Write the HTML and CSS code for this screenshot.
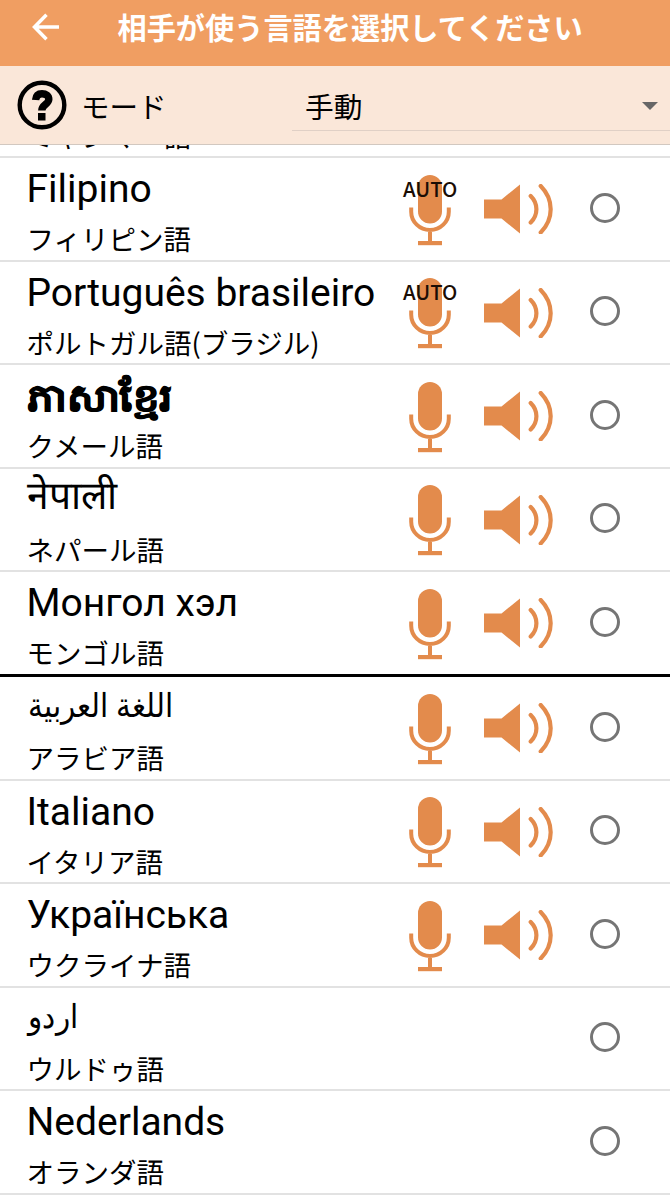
FILE: index.html
```
<!DOCTYPE html>
<html lang="ja">
<head>
  <meta charset="UTF-8">
  <meta name="viewport" content="width=device-width, initial-scale=1.0">
  <title>言語選択</title>
  <link rel="stylesheet" href="styles.css">
</head>
<body>
  <!-- アイコン定義 -->
  <svg class="defs" width="0" height="0">
    <symbol id="mic" viewBox="0 0 42 71">
      <rect x="9" y="0" width="24" height="48.5" rx="12" fill="currentColor"/>
      <path d="M2.2 32.500v4.200a18.800 18.300 0 0 0 37.600 0v-4.200M21 55v12" fill="none" stroke="currentColor" stroke-width="4"/>
      <rect x="9" y="66" width="24" height="4.200" fill="currentColor"/>
    </symbol>
    <symbol id="speaker" viewBox="0 0 70 50">
      <path d="M0 15.500h17.500L36 .5v49L17.500 34.500H0z" fill="currentColor"/>
      <path d="M46.700 12c7.600 7.500 7.600 19 0 26.500M56.700 2c13.300 13.500 13.300 33 0 46.500" fill="none" stroke="currentColor" stroke-width="4.200" stroke-linecap="round"/>
    </symbol>
  </svg>

  <header class="header">
    <svg class="back" viewBox="0 0 28 28"><path d="M27 14H3M14.500 1.800L2.500 14l12 12.200" fill="none" stroke="#fff" stroke-width="3.500"/></svg>
    <h1>相手が使う言語を選択してください</h1>
  </header>

  <div class="modo">
    <svg class="help" viewBox="0 0 50 50">
      <circle cx="25" cy="25" r="22.300" fill="none" stroke="#000" stroke-width="4.400"/>
      <path d="M18.600 20c.4-4.600 3-6.300 6.400-6.300 4 0 6.800 2.100 6.800 5.600 0 5-7 5.300-7 11.200" fill="none" stroke="#000" stroke-width="7.400"/>
      <rect x="21" y="33" width="7.500" height="7.500" fill="#000"/>
    </svg>
    <span class="label">モード</span>
    <div class="select">
      <span>手動</span>
      <span class="caret"></span>
    </div>
  </div>

  <main class="lista">
    <div class="fila">
      <div class="texto"><p class="nombre"></p><p class="ja">ミャンマー語</p></div>
    </div>
    <div class="fila">
      <div class="texto"><p class="nombre">Filipino</p><p class="ja">フィリピン語</p></div>
      <div class="mic"><svg><use href="#mic"/></svg><span class="auto">AUTO</span></div>
      <svg class="speaker"><use href="#speaker"/></svg>
      <span class="radio"></span>
    </div>
    <div class="fila">
      <div class="texto"><p class="nombre">Português brasileiro</p><p class="ja">ポルトガル語(ブラジル)</p></div>
      <div class="mic"><svg><use href="#mic"/></svg><span class="auto">AUTO</span></div>
      <svg class="speaker"><use href="#speaker"/></svg>
      <span class="radio"></span>
    </div>
    <div class="fila">
      <div class="texto"><p class="nombre khmer" lang="km">ភាសាខ្មែរ</p><p class="ja">クメール語</p></div>
      <div class="mic"><svg><use href="#mic"/></svg></div>
      <svg class="speaker"><use href="#speaker"/></svg>
      <span class="radio"></span>
    </div>
    <div class="fila">
      <div class="texto"><p class="nombre nepali" lang="ne">नेपाली</p><p class="ja">ネパール語</p></div>
      <div class="mic"><svg><use href="#mic"/></svg></div>
      <svg class="speaker"><use href="#speaker"/></svg>
      <span class="radio"></span>
    </div>
    <div class="fila separador">
      <div class="texto"><p class="nombre">Монгол хэл</p><p class="ja">モンゴル語</p></div>
      <div class="mic"><svg><use href="#mic"/></svg></div>
      <svg class="speaker"><use href="#speaker"/></svg>
      <span class="radio"></span>
    </div>
    <div class="fila">
      <div class="texto"><p class="nombre arabe" lang="ar">اللغة العربية</p><p class="ja">アラビア語</p></div>
      <div class="mic"><svg><use href="#mic"/></svg></div>
      <svg class="speaker"><use href="#speaker"/></svg>
      <span class="radio"></span>
    </div>
    <div class="fila">
      <div class="texto"><p class="nombre">Italiano</p><p class="ja">イタリア語</p></div>
      <div class="mic"><svg><use href="#mic"/></svg></div>
      <svg class="speaker"><use href="#speaker"/></svg>
      <span class="radio"></span>
    </div>
    <div class="fila">
      <div class="texto"><p class="nombre">Українська</p><p class="ja">ウクライナ語</p></div>
      <div class="mic"><svg><use href="#mic"/></svg></div>
      <svg class="speaker"><use href="#speaker"/></svg>
      <span class="radio"></span>
    </div>
    <div class="fila">
      <div class="texto"><p class="nombre arabe" lang="ur">اردو</p><p class="ja">ウルドゥ語</p></div>
      <span class="radio"></span>
    </div>
    <div class="fila">
      <div class="texto"><p class="nombre">Nederlands</p><p class="ja">オランダ語</p></div>
      <span class="radio"></span>
    </div>
  </main>
</body>
</html>
```
FILE: styles.css
```
*{
  box-sizing: border-box;
}
body{
  margin: 0;
  height: 1200px;
  display: flex;
  flex-direction: column;
  overflow: hidden;
  background-color: #fff;
  color: #000;
  font-family: Roboto, "Noto Sans CJK JP", sans-serif;
}
.defs{
  position: absolute;
}

/* Cabecera */
.header{
  height: 66px;
  flex: none;
  display: flex;
  align-items: flex-start;
  background-color: #f09e62;
  color: #fff;
}
.back{
  width: 28px;
  height: 28px;
  margin: 13px 0 0 32px;
}
.header h1{
  margin: 4px 0 0 57.5px;
  font-family: "Noto Sans CJK JP", sans-serif;
  font-size: 29.2px;
  line-height: 44px;
  font-weight: bold;
  white-space: nowrap;
}

/* Barra de modo */
.modo{
  height: 79px;
  flex: none;
  display: flex;
  background-color: #fae7d9;
  border-bottom: 1px solid #d2c8c0;
}
.help{
  width: 50px;
  height: 50px;
  margin: 14px 0 0 17px;
}
.label{
  width: 211px;
  margin-left: 14px;
  font-family: "Noto Sans CJK JP", sans-serif;
  font-size: 28.5px;
  line-height: 80px;
}
.select{
  flex: 1;
  height: 65px;
  padding: 0 12px 0 13px;
  display: flex;
  justify-content: space-between;
  align-items: center;
  border-bottom: 1px solid #e0d0c6;
  font-family: "Noto Sans CJK JP", sans-serif;
  font-size: 28.7px;
  line-height: 80px;
}
.select span:first-child{
  margin-top: 16px;
}
.caret{
  margin-top: 15px;
  border: 8px solid transparent;
  border-top-color: #666;
  border-bottom: 0;
}

/* Lista de idiomas */
.lista{
  flex: 1;
  overflow: hidden;
}
.fila{
  height: 103.5px;
  display: flex;
  align-items: flex-start;
  border-bottom: 2px solid #e2e2e2;
}
/* la primera fila queda cortada por el scroll */
.fila:first-child{
  margin-top: -90.4px;
}
.separador{
  height: 105px;
  border-bottom: 3px solid #000;
}
.texto{
  width: 382px;
  padding-left: 26.5px;
}
.texto p{
  margin: 0;
  white-space: nowrap;
}
.nombre{
  height: 62px;
  font-size: 39px;
  line-height: 63px;
}
.ja{
  font-family: "Noto Sans CJK JP", sans-serif;
  font-size: 27.5px;
  line-height: 37px;
}
.khmer{
  font-size: 38px;
  font-weight: bold;
  line-height: 66px;
  transform: scaleX(1.1);
  transform-origin: left;
  -webkit-text-stroke: 1px #000;
}
.nepali{
  line-height: 54px;
}
.arabe{
  padding-left: 1px;
  font-size: 33px;
  line-height: 57px;
  transform: scaleX(0.895);
  transform-origin: left;
}
.mic{
  position: relative;
  width: 42px;
  margin: 16.5px 0 0 27px;
  color: #e38b4c;
}
.mic svg{
  display: block;
  width: 42px;
  height: 71px;
}
.auto{
  position: absolute;
  top: 0;
  left: -6px;
  color: #1a0d05;
  font-family: "Noto Sans CJK JP", sans-serif;
  font-size: 20.3px;
  font-weight: 500;
  line-height: 27px;
}
.speaker{
  width: 70px;
  height: 50px;
  margin: 26px 0 0 33px;
  color: #e38b4c;
}
.radio{
  width: 30px;
  height: 30px;
  margin: 34.5px 50px 0 auto;
  border: 3px solid #757575;
  border-radius: 50%;
}
```
